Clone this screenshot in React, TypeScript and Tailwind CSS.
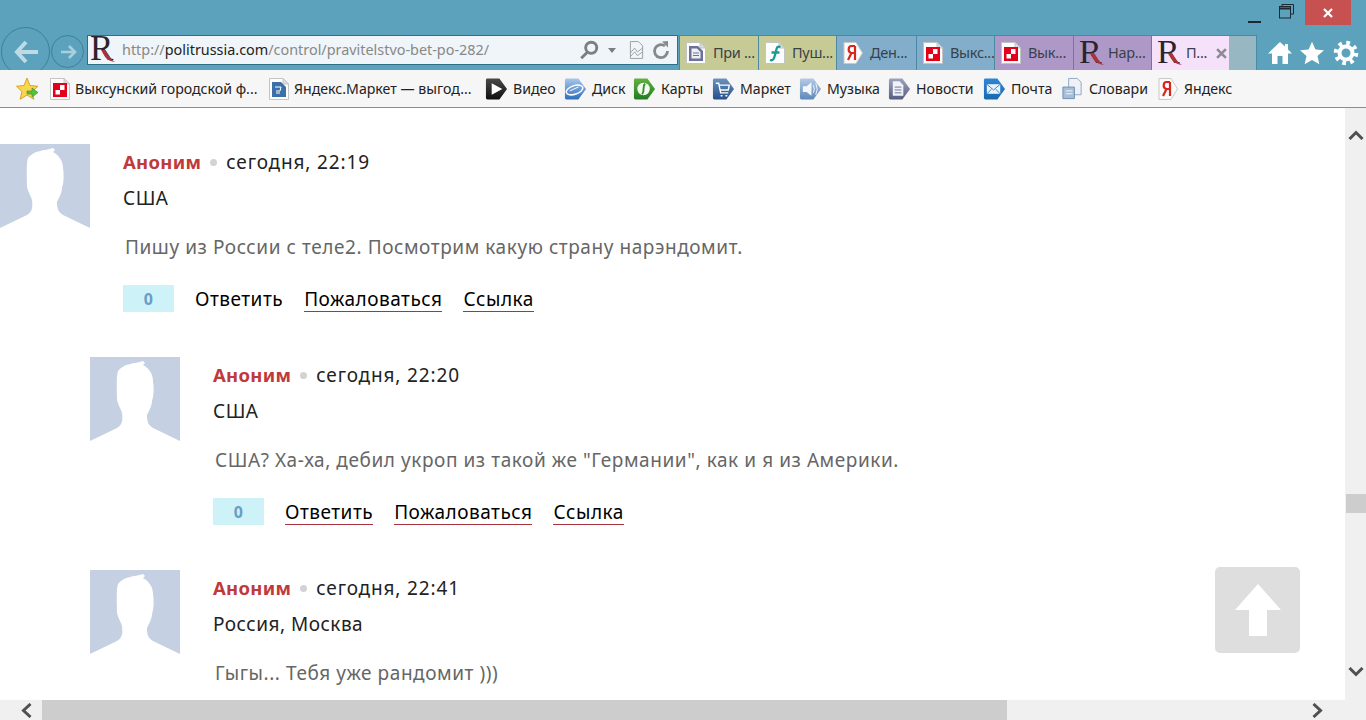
import React from 'react';

function RLogo({ big }: { big?: boolean }) {
  return (
    <span className={`relative inline-block shrink-0 h-[26px] ${big ? 'w-[25px]' : 'w-[23px]'}`}>
      <span className={`absolute left-0 top-[-4px] font-['Liberation_Serif',serif] text-[#2b2430] leading-[32px] ${big ? 'text-[35px]' : 'text-[34px]'}`}>R</span>
      <svg className="absolute left-0 top-0 w-[26px] h-[26px]" viewBox="0 0 26 26">
        <path d="M11 13C14 17 15 24 25 25C20 22 18 17 15 13Z" fill="#a8323e" />
      </svg>
    </span>
  );
}

function PageIcon({ children }: { children?: React.ReactNode }) {
  return (
    <svg className="w-[22px] h-[24px] shrink-0" viewBox="0 0 22 24">
      <path d="M1.500 1.500H15L20.500 7V22.500H1.500Z" fill="#fdfdfd" stroke="#c4c4c4" />
      <path d="M15 1.500V7H20.500Z" fill="#dedede" stroke="#c4c4c4" />
      {children}
    </svg>
  );
}

const RedSquare = () => (
  <PageIcon>
    <rect x="4" y="6" width="14" height="14" fill="#e2001a" />
    <path d="M11 8h4.500v5H11zM6.500 13H11v4.500H6.500z" fill="#fff" />
  </PageIcon>
);

const DocIcon = () => (
  <PageIcon>
    <path d="M4 5h9l5 5v10H4z" fill="#6a7299" />
    <path d="M6.500 7.500h5.500l3.500 3.500v6.500h-9z" fill="#eef0f6" />
    <path d="M8 12h6M8 14.500h6" stroke="#6a7299" />
  </PageIcon>
);

const FIcon = () => (
  <PageIcon>
    <path d="M6 19c3 1 4-1 5-5l1.500-6c.6-2 2-3 4-2M7.500 11.500h8" fill="none" stroke="#1b9a94" strokeWidth="2.300" />
  </PageIcon>
);

const YaIcon = () => (
  <svg className="w-[22px] h-[24px] shrink-0" viewBox="0 0 22 24">
    <path d="M2 1.500H14L20.500 12L14 22.500H2Z" fill="#fbfbfb" stroke="#c9c9c9" />
    <path d="M13 5V19M13 5H9.500C6 5 5.500 11.500 9.500 12H13M9.500 12L6 19" fill="none" stroke="#d8261c" strokeWidth="2.200" />
  </svg>
);

function Arrowed({ from, to, children }: { from: string; to: string; children?: React.ReactNode }) {
  const id = `g${from.slice(1)}`;
  return (
    <svg className="w-[23px] h-[24px] shrink-0" viewBox="0 0 24 24">
      <defs>
        <linearGradient id={id} x1="0" y1="0" x2="0" y2="1">
          <stop offset="0" stopColor={from} />
          <stop offset="1" stopColor={to} />
        </linearGradient>
      </defs>
      <path d="M1 2.500Q1 1 2.500 1H15L23 12L15 23H2.500Q1 23 1 21.500Z" fill={`url(#${id})`} />
      {children}
    </svg>
  );
}

const bookmarks: { label: string; icon: React.ReactNode; width: string; gap: string }[] = [
  {
    label: 'Видео',
    gap: 'ml-[14px]',
    width: 'w-[43px]',
    icon: (
      <Arrowed from="#4a4a4a" to="#0e0e0e">
        <path d="M7 6L18 12L7 18Z" fill="#fff" />
      </Arrowed>
    ),
  },
  {
    label: 'Диск',
    gap: 'ml-[8px]',
    width: 'w-[34px]',
    icon: (
      <Arrowed from="#a9c6ea" to="#2c6fbb">
        <ellipse cx="11" cy="13" rx="9" ry="4.500" fill="none" stroke="#fff" strokeWidth="1.600" transform="rotate(-18 11 13)" />
        <path d="M6 14l9-4" stroke="#fff" />
      </Arrowed>
    ),
  },
  {
    label: 'Карты',
    gap: 'ml-[7px]',
    width: 'w-[43px]',
    icon: (
      <Arrowed from="#62b23f" to="#1f7d22">
        <circle cx="11" cy="12" r="6.500" fill="#f4fbef" />
        <path d="M12.500 6.500C9 10 13 13 9.500 17.500" stroke="#2f8f2c" strokeWidth="2" fill="none" />
      </Arrowed>
    ),
  },
  {
    label: 'Маркет',
    gap: 'ml-[8px]',
    width: 'w-[50px]',
    icon: (
      <Arrowed from="#6b93bd" to="#244f8a">
        <path d="M4 6h3l2 10h8M8 8h10l-1 5H9" fill="none" stroke="#fff" strokeWidth="1.400" />
        <path d="M9 19h2M14 19h2" stroke="#fff" strokeWidth="1.600" />
      </Arrowed>
    ),
  },
  {
    label: 'Музыка',
    gap: 'ml-[9px]',
    width: 'w-[53px]',
    icon: (
      <Arrowed from="#b5cbe3" to="#5d88b9">
        <path d="M4 9h4l5-4v14l-5-4H4z" fill="#f3f7fb" />
        <path d="M15 8q2 4 0 8M17.500 6q3 6 0 12" stroke="#f3f7fb" fill="none" />
      </Arrowed>
    ),
  },
  {
    label: 'Новости',
    gap: 'ml-[8px]',
    width: 'w-[59px]',
    icon: (
      <Arrowed from="#9ea3bf" to="#555c80">
        <path d="M5 4h7l4 4v11H5z" fill="#f1f2f7" />
        <path d="M7 10h7M7 13h7M7 16h7" stroke="#6a7299" />
      </Arrowed>
    ),
  },
  {
    label: 'Почта',
    gap: 'ml-[8px]',
    width: 'w-[42px]',
    icon: (
      <Arrowed from="#2e86d4" to="#1868b0">
        <rect x="4" y="7" width="14" height="10" fill="#eaf3fb" />
        <path d="M4 7l7 6 7-6M4 17l5-5M18 17l-5-5" stroke="#2e86d4" fill="none" />
      </Arrowed>
    ),
  },
  {
    label: 'Словари',
    gap: 'ml-[8px]',
    width: 'w-[60px]',
    icon: (
      <svg className="w-[23px] h-[24px] shrink-0" viewBox="0 0 24 24">
        <path d="M8 1h9l4 4v13H8z" fill="#eef2f7" stroke="#8ea6c2" />
        <path d="M2 10h12v12H2z" fill="#a8bed6" stroke="#6f8fb2" />
        <path d="M5 14h7M5 17h7" stroke="#f5f8fb" />
      </svg>
    ),
  },
  { label: 'Яндекс', gap: 'ml-[8px]', width: 'w-[49px]', icon: <YaIcon /> },
];

const tabs: { label: string; icon: React.ReactNode; bg: string; w: string }[] = [
  { label: 'При ...', icon: <DocIcon />, bg: 'bg-[#c6cb96]', w: 'w-[79px]' },
  { label: 'Пуш...', icon: <FIcon />, bg: 'bg-[#c6cb96]', w: 'w-[78px]' },
  { label: 'Ден...', icon: <YaIcon />, bg: 'bg-[#82aecb]', w: 'w-[80px]' },
  { label: 'Выкс...', icon: <RedSquare />, bg: 'bg-[#82aecb]', w: 'w-[78px]' },
  { label: 'Вык...', icon: <RedSquare />, bg: 'bg-[#ae98c8]', w: 'w-[79px]' },
  { label: 'Нар...', icon: <RLogo />, bg: 'bg-[#ae98c8]', w: 'w-[78px]' },
];

function Avatar() {
  return (
    <svg className="w-[90px] h-[84px] shrink-0" viewBox="0 0 90 84">
      <defs>
        <filter id="soft" x="-5%" y="-5%" width="110%" height="110%">
          <feGaussianBlur stdDeviation="0.6" />
        </filter>
      </defs>
      <path
        d="M0 0H90V84L63 71C58 68 57 64 57 58C60 52 62 48 62 44C64 38 64 30 63 24C63 18 60 12 53 8L55 6L53 4C44 7 34 6 28 14C26 20 27 34 27 43C28 48 31 52 32 56C33 64 32 68 27 71L0 84Z"
        fill="#c5d0e3"
        filter="url(#soft)"
      />
    </svg>
  );
}

function ActionLink({ label }: { label: string }) {
  return <span className="text-black pt-[2px] leading-[24px] border-b border-[#a9343f]">{label}</span>;
}

function Comment({ time, place, text, nested, underlineReply, noActions }: { time: string; place: string; text: string; nested?: boolean; underlineReply?: boolean; noActions?: boolean }) {
  return (
    <div className={`flex h-[213px] ${nested ? 'ml-[90px]' : ''}`}>
      <Avatar />
      <div className="ml-[33px] flex flex-col">
        <div className="flex items-center h-[36px] text-[19px]">
          <span className="font-bold text-[#c0393b] text-[18.500px] tracking-[0.3px]">Аноним</span>
          <span className="w-[7px] h-[7px] rounded-full bg-[#d3d3d3] mx-[9px]" />
          <span className="text-[#222] tracking-[0.85px]">{time}</span>
        </div>
        <div className="h-[36px] leading-[36px] text-[19px] text-[#222] tracking-[0.5px]">{place}</div>
        <div className="mt-[13px] ml-[2px] h-[36px] leading-[36px] text-[19px] text-[#666] whitespace-nowrap tracking-[0.57px]">{text}</div>
        {!noActions && (
          <div className="mt-[20px] flex items-start gap-[21px] text-[19px] tracking-[0.5px]">
            <span className="w-[51px] h-[27px] bg-[#cdf2f7] flex items-center justify-center text-[16px] font-bold text-[#6b9cc8]">0</span>
            {underlineReply ? <ActionLink label="Ответить" /> : <span className="text-black pt-[2px] leading-[24px]">Ответить</span>}
            <ActionLink label="Пожаловаться" />
            <ActionLink label="Ссылка" />
          </div>
        )}
      </div>
    </div>
  );
}

export default function App() {
  return (
    <div className="w-[1366px] h-[720px] overflow-hidden flex flex-col bg-white relative font-['Noto_Sans',sans-serif]">
      {/* browser chrome */}
      <div className="h-[70px] bg-[#5ca2bc] flex flex-col shrink-0">
        <div className="h-[35px] flex justify-end shrink-0">
          <div className="flex items-start text-[#1c2a33] mr-[15px]">
            <div className="w-[13px] h-[24px] flex items-end justify-center pb-[1px] mr-[18px]">
              <span className="w-[13px] h-[2px] bg-[#1c2a33]" />
            </div>
            <svg className="w-[24px] h-[24px] mr-[6px] -ml-[4px]" viewBox="0 0 24 24" fill="none" stroke="#1c2a33">
              <path d="M7 6.500V4.500H18.500V14H16" />
              <rect x="4.500" y="6.500" width="11" height="11.500" />
              <path d="M4.500 8.500h11" strokeWidth="2" />
            </svg>
            <div className="w-[46px] h-[25px] bg-[#c75050] flex items-center justify-center">
              <svg className="w-[10px] h-[10px]" viewBox="0 0 10 10" stroke="#fff" strokeWidth="2.200">
                <path d="M1 1l8 8M9 1l-8 8" />
              </svg>
            </div>
          </div>
        </div>
        <div className="flex h-[35px] items-start">
          <div className="w-[49px] h-[49px] -mt-[8px] ml-[1px] rounded-full border border-[#3f7f97] flex items-center justify-center shrink-0">
            <svg className="w-[28px] h-[28px]" viewBox="0 0 28 28" fill="none" stroke="#bcdbe6" strokeWidth="4">
              <path d="M14 4L5 14L14 24M6 14H26" />
            </svg>
          </div>
          <div className="w-[33px] h-[33px] ml-[1px] rounded-full border border-[#3f7f97] flex items-center justify-center shrink-0">
            <svg className="w-[18px] h-[18px]" viewBox="0 0 18 18" fill="none" stroke="#a9cfdc" strokeWidth="2.600">
              <path d="M10 3l6 6-6 6M15 9H2" />
            </svg>
          </div>
          <div className="ml-[3px] w-[591px] h-[30px] bg-[#eff5f8] border border-[#2c6f88] flex items-center shrink-0 pl-[2px]">
            <RLogo big />
            <span className="ml-[7px] text-[14.400px] text-[#888] whitespace-nowrap">
              http://<span className="text-[#222]">politrussia.com</span>/control/pravitelstvo-bet-po-282/
            </span>
            <svg className="ml-auto w-[20px] h-[20px]" viewBox="0 0 18 18" fill="none" stroke="#7a7f82" strokeWidth="2.600">
              <circle cx="11" cy="7" r="5" />
              <path d="M7.500 11L2 16.500" />
            </svg>
            <svg className="ml-[8px] w-[10px] h-[5px]" viewBox="0 0 8 5">
              <path d="M0 0h8L4 5z" fill="#7a7f82" />
            </svg>
            <svg className="ml-[12px] w-[15px] h-[20px]" viewBox="0 0 16 20" fill="none" stroke="#9a9da0">
              <path d="M1.500 1H10L14.500 5.500V19H1.500Z" />
              <path d="M1.500 13L6 8L9 12L14.500 8M1.500 17L6 12L9 16L14.500 12" />
            </svg>
            <svg className="ml-[8px] mr-[7px] w-[18px] h-[20px]" viewBox="0 0 18 20" fill="none" stroke="#85898c" strokeWidth="2.800">
              <path d="M13 6A6.500 6.500 0 1 0 15.500 11" />
              <path d="M10 1.500L16 1V7.500Z" fill="#85898c" stroke="none" />
            </svg>
          </div>
          <div className="flex h-[35px] ml-[1px] border border-b-0 border-[#4a8aa3]">
            {tabs.map((t) => (
              <div
                key={t.label}
                className={`${t.w} ${t.bg} h-full border-r border-[#4a8aa3] flex items-center pl-[5px] gap-[6px] overflow-hidden text-[14.500px] tracking-[-0.3px] text-[#39414a] whitespace-nowrap shrink-0`}
              >
                {t.icon}
                <span>{t.label}</span>
              </div>
            ))}
            <div className="w-[77px] h-full bg-[#f5e2fa] flex items-center pl-[5px] gap-[6px] text-[14.500px] tracking-[-0.3px] text-[#39414a] shrink-0">
              <RLogo />
              <span>П...</span>
              <svg className="ml-[3px] w-[11px] h-[11px]" viewBox="0 0 10 10" stroke="#8c8c96" strokeWidth="2.400">
                <path d="M1 1l8 8M9 1l-8 8" />
              </svg>
            </div>
            <div className="w-[27px] h-full bg-[#97b7c3]" />
          </div>
          <div className="ml-[10px] flex items-center gap-[6px] h-[35px]">
            <svg className="w-[26px] h-[26px]" viewBox="0 0 26 26" fill="#fff">
              <path d="M13 2L1 13.500H5V24H10.500V16H15.500V24H21V13.500H25L21 9.500V4H18V6.500Z" />
            </svg>
            <svg className="w-[26px] h-[26px]" viewBox="0 0 24 24" fill="#fff">
              <path d="M12 1.500l3.200 7.200 7.800.8-5.900 5.200 1.700 7.700L12 18.400l-6.800 4 1.700-7.700L1 9.500l7.800-.8z" />
            </svg>
            <svg className="ml-[2px] w-[26px] h-[26px]" viewBox="0 0 26 26" fill="none" stroke="#fff">
              <circle cx="13" cy="13" r="6.500" strokeWidth="4" />
              <circle cx="13" cy="13" r="10" strokeWidth="4.500" strokeDasharray="3.600 4.250" />
            </svg>
          </div>
        </div>
      </div>

      {/* favorites bar */}
      <div className="h-[38px] bg-[#f6f6f6] border-b border-[#8d8d8d] shrink-0 flex items-center text-[14.150px] text-[#222] whitespace-nowrap pl-[16px]">
        <svg className="w-[24px] h-[26px] shrink-0" viewBox="0 0 24 26">
          <path d="M11 2l3 7.500 8 .8-6 5.200 1.800 7.800L11 19l-6.800 4.300L6 15.500 .5 10.300l7.500-.8z" fill="#f8d64e" stroke="#d9a22a" />
          <path d="M11 15h5v-3l6 4.500-6 4.500v-3h-5z" fill="#55c23a" stroke="#2f8f2c" strokeWidth="0.600" />
        </svg>
        <div className="flex items-center ml-[9px] gap-[4px] w-[210px] shrink-0">
          <RedSquare />
          <span>Выксунский городской ф...</span>
        </div>
        <div className="flex items-center ml-[9px] gap-[4px] w-[203px] shrink-0">
          <PageIcon>
            <path d="M4 5h9l5 5v10H4z" fill="#3c6ea8" />
            <path d="M7 10h6l-1 4H8M8 16h4" stroke="#fff" fill="none" />
          </PageIcon>
          <span>Яндекс.Маркет — выгод...</span>
        </div>
        {bookmarks.map((b) => (
          <div key={b.label} className={`flex items-center gap-[5px] shrink-0 ${b.gap}`}>
            {b.icon}
            <span className={b.width}>{b.label}</span>
          </div>
        ))}
      </div>

      {/* page + vertical scrollbar */}
      <div className="flex flex-1 min-h-0">
        <div className="flex-1 overflow-hidden pt-[36px] relative">
          <Comment time="сегодня, 22:19" place="США" text="Пишу из России с теле2. Посмотрим какую страну нарэндомит." />
          <Comment nested underlineReply time="сегодня, 22:20" place="США" text={'США? Ха-ха, дебил укроп из такой же "Германии", как и я из Америки.'} />
          <Comment nested noActions time="сегодня, 22:41" place="Россия, Москва" text="Гыгы... Тебя уже рандомит )))" />
          <div className="absolute left-[1215px] top-[459px] w-[85px] h-[86px] rounded-[5px] bg-[#dedede] flex items-center justify-center">
            <svg className="w-[46px] h-[52px]" viewBox="0 0 46 52" fill="#fff">
              <path d="M23 0L46 26H32V52H14V26H0Z" />
            </svg>
          </div>
        </div>
        <div className="w-[21px] bg-[#f0f0f0] flex flex-col items-center shrink-0">
          <svg className="mt-[22px] w-[16px] h-[10px]" viewBox="0 0 16 10" fill="none" stroke="#505050" strokeWidth="3">
            <path d="M1.500 9L8 2.500L14.500 9" />
          </svg>
          <div className="mt-[354px] w-[20px] h-[19px] bg-[#cdcdcd] ml-[1px]" />
          <svg className="mt-[154px] w-[16px] h-[10px]" viewBox="0 0 16 10" fill="none" stroke="#505050" strokeWidth="3">
            <path d="M1.500 1L8 7.500L14.500 1" />
          </svg>
        </div>
      </div>

      {/* horizontal scrollbar */}
      <div className="h-[20px] bg-[#f0f0f0] shrink-0 flex items-center">
        <svg className="ml-[21px] w-[11px] h-[15px]" viewBox="0 0 11 15" fill="none" stroke="#505050" strokeWidth="3">
          <path d="M9.500 1L2.500 7.500L9.500 14" />
        </svg>
        <div className="ml-[10px] w-[965px] h-[20px] bg-[#cdcdcd]" />
        <svg className="ml-[305px] w-[11px] h-[15px]" viewBox="0 0 11 15" fill="none" stroke="#505050" strokeWidth="3">
          <path d="M1.500 1L8.500 7.500L1.500 14" />
        </svg>
      </div>
    </div>
  );
}
